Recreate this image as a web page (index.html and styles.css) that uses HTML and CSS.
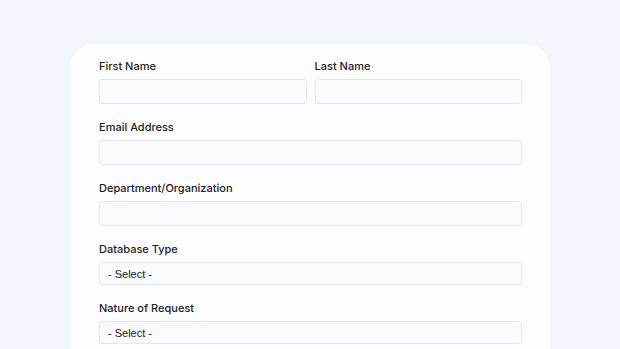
FILE: index.html
```html
<!DOCTYPE html>
<html lang="en">
<head>
  <meta charset="UTF-8">
  <meta name="viewport" content="width=device-width, initial-scale=1.0">
  <title>Request Form</title>
  <link rel="stylesheet" href="styles.css">
</head>
<body>
  <section class="card">
    <div class="row">
      <div class="field">
        <label for="first">First Name</label>
        <input type="text" id="first">
      </div>
      <div class="field">
        <label for="last">Last Name</label>
        <input type="text" id="last">
      </div>
    </div>

    <div class="field">
      <label for="email">Email Address</label>
      <input type="email" id="email">
    </div>

    <div class="field">
      <label for="dept">Department/Organization</label>
      <input type="text" id="dept">
    </div>

    <div class="field">
      <label for="dbtype">Database Type</label>
      <select id="dbtype">
        <option>- Select -</option>
      </select>
    </div>

    <div class="field">
      <label for="nature">Nature of Request</label>
      <select id="nature">
        <option>- Select -</option>
      </select>
    </div>
  </section>
</body>
</html>
```

FILE: styles.css
```css
html, body {
  margin: 0;
  height: 100%;
  overflow: hidden;
}
body {
  font-family: Inter, "Noto Sans", sans-serif;
  background-color: #f3f5fd;
  padding-top: 44px;
  box-sizing: border-box;
}
.card {
  width: 480px;
  margin: 0 0 0 70px;
  padding: 15px 28px 40px 29px;
  box-sizing: border-box;
  background-color: #fdfdff;
  border-radius: 24px;
  display: flex;
  flex-direction: column;
  gap: 16px;
}
.row {
  display: flex;
  gap: 8px;
}
.row .field {
  flex: 1;
}
.field {
  display: flex;
  flex-direction: column;
  gap: 6px;
}
label {
  font-size: 11px;
  font-weight: 500;
  line-height: 14px;
  color: #1f2024;
}
input, select {
  margin: 0;
  height: 25px;
  padding: 0 8px;
  border: 1px solid #e6e8ef;
  border-radius: 3px;
  background-color: #f9fafd;
  box-sizing: border-box;
  width: 100%;
  font-family: "Liberation Sans", Arial, sans-serif;
  font-size: 11px;
  color: #222;
}
select {
  height: 23px;
  appearance: none;
  -webkit-appearance: none;
}
```
